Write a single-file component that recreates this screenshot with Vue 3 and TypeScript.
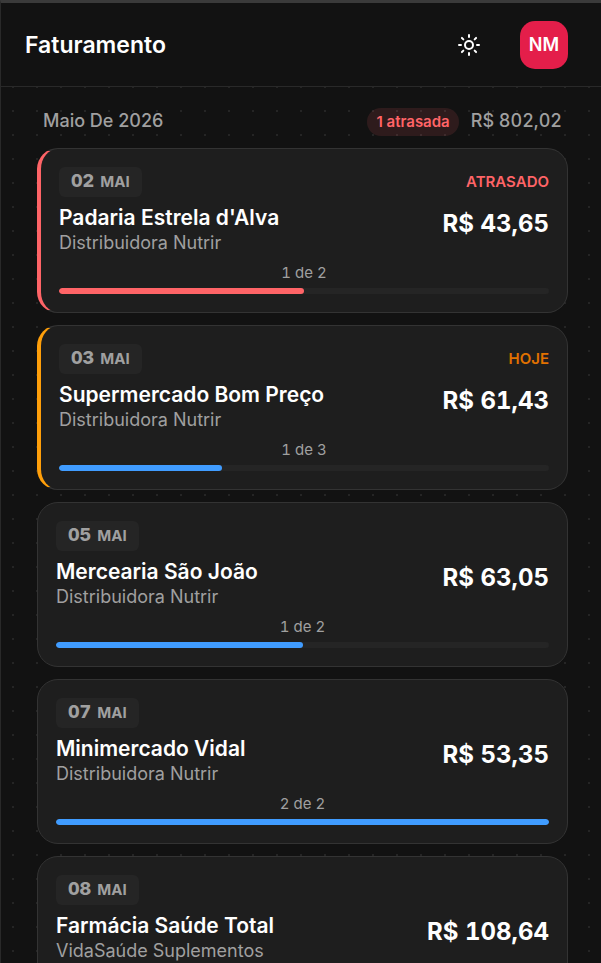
<script setup lang="ts">
type Tone = 'late' | 'today' | 'normal'

interface Invoice {
  day: string
  month: string
  client: string
  supplier: string
  amount: string
  paid: number
  total: number
  tone: Tone
  status?: string
}

const invoices: Invoice[] = [
  { day: '02', month: 'MAI', client: "Padaria Estrela d'Alva", supplier: 'Distribuidora Nutrir', amount: 'R$ 43,65', paid: 1, total: 2, tone: 'late', status: 'ATRASADO' },
  { day: '03', month: 'MAI', client: 'Supermercado Bom Preço', supplier: 'Distribuidora Nutrir', amount: 'R$ 61,43', paid: 1, total: 3, tone: 'today', status: 'HOJE' },
  { day: '05', month: 'MAI', client: 'Mercearia São João', supplier: 'Distribuidora Nutrir', amount: 'R$ 63,05', paid: 1, total: 2, tone: 'normal' },
  { day: '07', month: 'MAI', client: 'Minimercado Vidal', supplier: 'Distribuidora Nutrir', amount: 'R$ 53,35', paid: 2, total: 2, tone: 'normal' },
  { day: '08', month: 'MAI', client: 'Farmácia Saúde Total', supplier: 'VidaSaúde Suplementos', amount: 'R$ 108,64', paid: 1, total: 2, tone: 'normal' },
]

const percent = (i: Invoice): string => `${(i.paid / i.total) * 100}%`
</script>

<template>
  <div class="app">
    <header class="topbar">
      <h1 class="heading">Faturamento</h1>
      <div class="actions">
        <button class="theme" type="button" aria-label="Alternar tema">
          <svg width="24" height="24" viewBox="0 0 24 24" fill="none" stroke="currentColor" stroke-width="2" stroke-linecap="round">
            <circle cx="12" cy="12" r="4" />
            <path d="M12 2v2M12 20v2M4.93 4.93l1.41 1.41M17.66 17.66l1.41 1.41M2 12h2M20 12h2M6.34 17.66l-1.41 1.41M19.07 4.93l-1.41 1.41" />
          </svg>
        </button>
        <button class="avatar" type="button">NM</button>
      </div>
    </header>

    <main class="content">
      <div class="month">
        <h2 class="month-name">Maio De 2026</h2>
        <div class="month-info">
          <span class="late-count">1 atrasada</span>
          <span class="month-total">R$ 802,02</span>
        </div>
      </div>

      <ul class="list">
        <li v-for="invoice in invoices" :key="invoice.day" class="card" :class="invoice.tone">
          <div class="row">
            <div class="date">
              <span class="day">{{ invoice.day }}</span>
              <span class="mon">{{ invoice.month }}</span>
            </div>
            <span v-if="invoice.status" class="status">{{ invoice.status }}</span>
          </div>
          <div class="row details">
            <div>
              <h3 class="client">{{ invoice.client }}</h3>
              <p class="supplier">{{ invoice.supplier }}</p>
            </div>
            <strong class="amount">{{ invoice.amount }}</strong>
          </div>
          <p class="count">{{ invoice.paid }} de {{ invoice.total }}</p>
          <div class="track">
            <div class="fill" :style="{ width: percent(invoice) }"></div>
          </div>
        </li>
      </ul>
    </main>
  </div>
</template>

<style>
html {
  background: #121212;
}
body {
  scrollbar-width: none;
}
</style>

<style scoped>
.app {
  box-sizing: border-box;
  min-height: 100vh;
  border-top: 3px solid #3a3a3a;
  border-left: 1px solid #292929;
  background: #121212;
  color: #fff;
  font-family: Inter, "Liberation Sans", sans-serif;
}
h1, h2, h3, p, ul {
  margin: 0;
  padding: 0;
}
button {
  border: 0;
  padding: 0;
  font-family: inherit;
  cursor: pointer;
}
.topbar {
  display: flex;
  align-items: center;
  justify-content: space-between;
  height: 83px;
  padding: 0 33px 0 24px;
  border-bottom: 1px solid #292929;
}
.heading {
  font-size: 23px;
  line-height: 32px;
  font-weight: 600;
}
.actions {
  display: flex;
  align-items: center;
  gap: 27px;
}
.theme {
  display: grid;
  place-items: center;
  width: 48px;
  height: 48px;
  background: transparent;
  color: #fff;
}
.avatar {
  width: 48px;
  height: 48px;
  border-radius: 15px;
  background: #e41e4a;
  color: #fff;
  font-size: 18px;
  line-height: 24px;
  font-weight: 600;
}
.content {
  padding: 21px 33px 24px 36px;
  background-image: radial-gradient(circle, #252525 1px, transparent 1px);
  background-size: 24px 24px;
  background-position: 0 12px;
}
.month {
  display: flex;
  align-items: flex-start;
  justify-content: space-between;
  padding: 0 6px;
  margin-bottom: 12px;
  color: #a0a0a0;
}
.month-name,
.month-total {
  font-size: 18px;
  line-height: 26px;
  font-weight: 500;
}
.month-total,
.day,
.amount,
.count {
  font-variant-numeric: tabular-nums;
}
.month-info {
  display: flex;
  align-items: flex-start;
  gap: 12px;
}
.late-count {
  padding: 0 9px;
  border-radius: 14px;
  background: rgba(255, 100, 103, 0.12);
  color: #ff6467;
  font-size: 15px;
  line-height: 28px;
  font-weight: 600;
}
.list {
  display: flex;
  flex-direction: column;
  gap: 12px;
  list-style: none;
}
.card {
  padding: 18px;
  border: 1px solid #333;
  border-radius: 21px;
  background: #1e1e1e;
}
.late {
  border-left: 4px solid #ff6467;
}
.today {
  border-left: 4px solid #ff9f0a;
}
.row {
  display: flex;
  align-items: flex-start;
  justify-content: space-between;
}
.date {
  display: flex;
  align-items: center;
  gap: 6px;
  padding: 0 12px;
  border-radius: 6px;
  background: #252525;
  color: #a0a0a0;
  line-height: 30px;
}
.day {
  font-size: 18px;
  line-height: 28px;
  font-weight: 800;
  padding-bottom: 2px;
}
.mon {
  font-size: 15px;
  font-weight: 700;
}
.status {
  font-size: 15px;
  line-height: 30px;
  font-weight: 600;
}
.late .status {
  color: #ff6467;
}
.today .status {
  color: #e17100;
}
.details {
  padding-top: 8px;
}
.client {
  font-size: 21px;
  line-height: 26px;
  font-weight: 600;
}
.supplier {
  color: #a0a0a0;
  font-size: 18px;
  line-height: 24px;
}
.amount {
  font-size: 24px;
  line-height: 38px;
  font-weight: 700;
}
.count {
  padding: 8px 0 5px;
  color: #a0a0a0;
  font-size: 15px;
  line-height: 20px;
  text-align: center;
}
.track {
  height: 6px;
  border-radius: 3px;
  background: #252525;
  overflow: hidden;
}
.fill {
  height: 100%;
  border-radius: 3px;
  background: #409cff;
}
.late .fill {
  background: #ff6467;
}
</style>
